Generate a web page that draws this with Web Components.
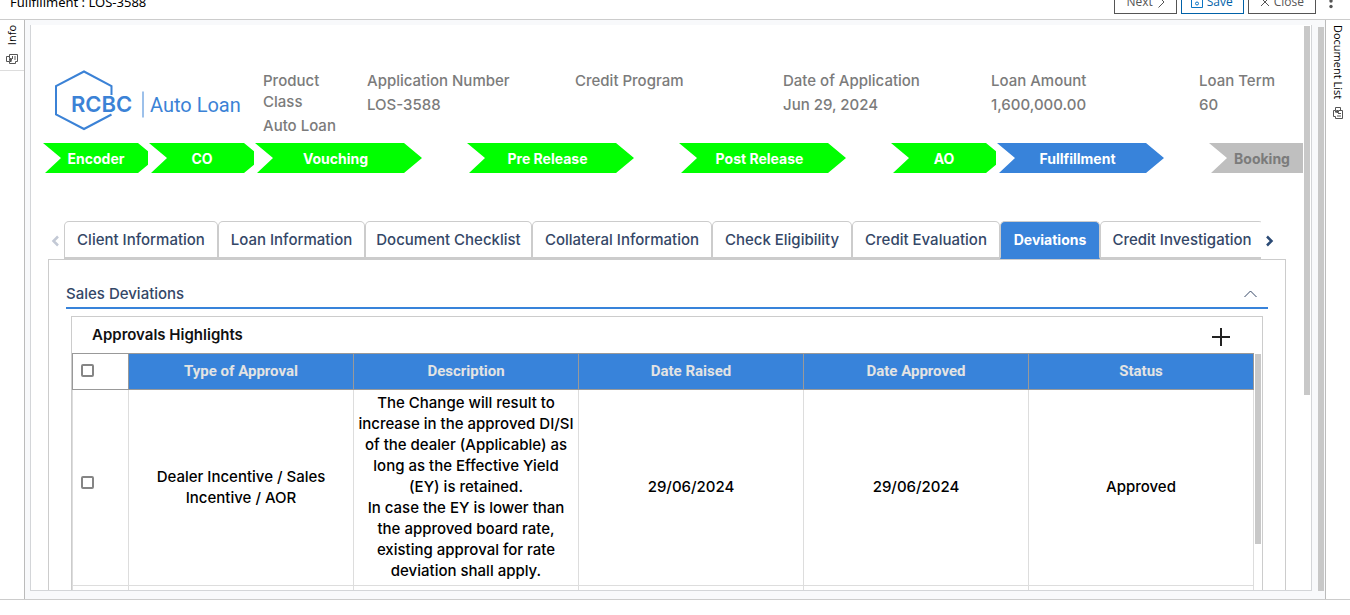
<!DOCTYPE html>
<html lang="en">
<head>
<meta charset="utf-8">
<title>Fullfillment : LOS-3588</title>
<style>
html,body{margin:0;height:100%}
body{font:500 15px/21px Inter,sans-serif;background:#fff;overflow:hidden;--blue:#3883da;--navy:#344767;--line:#ccc}
</style>
</head>
<body>
<los-app></los-app>
<script>
const define = (name, html, setup) => customElements.define(name, class extends HTMLElement {
  connectedCallback() {
    if (this.shadowRoot) return;
    const t = document.createElement('template');
    t.innerHTML = html;
    this.attachShadow({mode: 'open'}).append(t.content.cloneNode(true));
    if (setup) setup(this);
  }
});

define('los-scrollbar', `<style>:host{display:block;width:6px;background:#c8c8c8}</style>`);

define('los-button', `<style>
:host{display:block}
button{box-sizing:border-box;height:24px;display:flex;align-items:center;gap:4px;padding:0 11px;background:#fff;border:1px solid var(--c,#555);color:var(--c,#555);font:12px/20px "Open Sans",sans-serif}
:host(.save) button{padding:0 10px 0 9px}
</style><button type="button"><slot></slot></button>`);

define('los-topbar', `<style>
:host{display:flex;align-items:flex-end;justify-content:space-between;box-sizing:border-box;height:20px;border-bottom:1px solid var(--line);padding:0 13px 5px 10px;overflow:hidden;background:#fff}
h1{margin:0 0 1px;font:13px/22px "Noto Sans",sans-serif;color:#000}
nav{display:flex;align-items:flex-end;gap:4px}
.save{--c:#0061a8}
svg{display:block;flex:none;fill:none;stroke:currentColor}
.more{border:0;background:none;padding:0;margin-left:5px;width:12px;height:24px;color:#555}
</style>
<h1>Fullfillment : LOS-3588</h1>
<nav>
<los-button>Next<svg width="8" height="12" viewBox="0 0 8 12"><path d="M1.500 .5l5.500 5.500-5.500 5.500"/></svg></los-button>
<los-button class="save"><svg width="12" height="12" viewBox="0 0 12 12"><path d="M.5.5h11v11H.5zM3 .5v3h6v-3" stroke="#0a74c4"/><circle cx="6" cy="7.500" r="1.500" stroke="#0a74c4"/></svg>Save</los-button>
<los-button><svg width="10" height="10" viewBox="0 0 10 10"><path d="M1 1l8 8M9 1L1 9"/></svg>Close</los-button>
<button class="more" type="button" aria-label="More"><svg width="12" height="24" viewBox="0 0 12 24" style="fill:currentColor;stroke:none"><circle cx="6" cy="6" r="1.700"/><circle cx="6" cy="11" r="1.700"/><circle cx="6" cy="16.500" r="1.700"/></svg></button>
</nav>`);

define('los-rail', `<style>
:host{display:block;box-sizing:border-box;width:25px;background:#fff;border:0 solid #bbb}
:host([side=left]){border-right-width:1px}
:host([side=right]){border-left-width:1px}
button{display:flex;flex-direction:column;align-items:center;gap:8px;box-sizing:border-box;width:24px;padding:5px 0;border:0;background:none;color:#000;font:11px/16px "Open Sans",sans-serif}
:host([side=left]) button{border-bottom:1px solid #ddd}
span{writing-mode:vertical-rl}
:host([side=left]) span{transform:rotate(180deg)}
:host([side=right]) svg{transform:rotate(90deg)}
svg{display:block;fill:none;stroke:#555}
</style><button type="button"><span><slot></slot></span>
<svg width="12" height="12" viewBox="0 0 12 12"><path d="M3.500 5V1.500h8v7h-2M9.500 8.500v2h-6v-2M3.500 3.500h-3v5h3"/><path d="M3 6.500h3M4.500 5v4" stroke-width="2"/><path d="M6.500 3v3M9 3v4"/></svg></button>`);

define('los-logo', `<style>
:host{display:block;color:#3b82d6}
svg{display:block;overflow:visible}
</style><svg width="186" height="60" viewBox="0 0 186 60" role="img" aria-label="RCBC Auto Loan">
<path d="M57.500 25V16L30 1.500 2 16V44.500l28 14.500L57.500 44.500" fill="none" stroke="currentColor" stroke-width="2"/>
<path d="M89 21.500v26" stroke="currentColor"/>
<text x="17" y="42" fill="currentColor" font-family="Inter" font-weight="600" font-size="22">RCBC</text>
<text x="96" y="42" fill="currentColor" font-family="Roboto" font-weight="400" font-size="20">Auto Loan</text>
</svg>`);

define('los-field', `<style>
:host{display:block;color:#7b7b7b}
dl,dd,dt{margin:0}
dd{margin-top:3px}
</style><dl><dt><slot name="label"></slot></dt><dd><slot></slot></dd></dl>`);

define('los-summary', `<style>
:host{display:grid;grid-template-columns:repeat(12,minmax(0,1fr));padding:45px 8px 0 16px;height:73px}
los-logo{grid-column:span 2;padding-left:7px}
los-field{grid-column:span 2;padding:0 8px}
los-field.one{grid-column:span 1;padding-right:0}
</style>
<los-logo></los-logo>
<los-field class="one"><span slot="label">Product<br>Class</span>Auto Loan</los-field>
<los-field><span slot="label">Application Number</span>LOS-3588</los-field>
<los-field><span slot="label">Credit Program</span></los-field>
<los-field><span slot="label">Date of Application</span>Jun 29, 2024</los-field>
<los-field><span slot="label">Loan Amount</span>1,600,000.00</los-field>
<los-field class="one"><span slot="label">Loan Term</span>60</los-field>`);

define('los-step', `<style>
:host{display:block;overflow:hidden;grid-column:span 2;--bg:#0f0;color:#fff;margin-right:1px}
:host([narrow]){grid-column:span 1}
:host([state=current]){--bg:var(--blue)}
:host([state=todo]){--bg:#bfbfbf;color:#7b7b7b}
div{box-sizing:border-box;width:167px;height:30px;padding-right:6px;background:var(--bg);clip-path:polygon(0 0,149px 0,100% 50%,149px 100%,2px 100%,18px 50%);text-align:center;font-size:14px;font-weight:700;line-height:32px}
:host([narrow]) div{width:113px;padding-right:7px;clip-path:polygon(0 0,95px 0,100% 50%,95px 100%,2px 100%,18px 50%)}
</style><div><slot></slot></div>`);

define('los-stepper', `<style>
:host{display:grid;grid-template-columns:repeat(12,minmax(0,1fr));margin:0 -12px 0 12px}
</style>
<los-step narrow>Encoder</los-step><los-step narrow>CO</los-step><los-step>Vouching</los-step><los-step>Pre Release</los-step><los-step>Post Release</los-step><los-step narrow>AO</los-step><los-step state="current">Fullfillment</los-step><los-step narrow state="todo">Booking</los-step>`);

define('los-tabs', `<style>
:host{display:flex;align-items:center;margin:0 26px 0 17px;color:var(--navy)}
.list{display:flex;flex:1;min-width:0;overflow:hidden}
.list button{flex:none;box-sizing:border-box;height:38px;padding:0;border:1px solid var(--line);border-bottom-width:2px;border-radius:5px 5px 0 0;background:#fff;color:inherit;font:inherit;white-space:nowrap}
.list button[aria-selected=true]{background:var(--blue);border-bottom-color:var(--blue);color:#fff;font-size:14px;font-weight:700}
.nav{flex:none;width:16px;height:38px;padding:0;border:0;background:none;color:#2b4a75}
.nav.off{color:#c3c9d5}
svg{display:block;margin:2px auto 0;fill:none;stroke:currentColor;stroke-width:2.500}
</style>
<button class="nav off" type="button" aria-label="Previous tabs"><svg width="10" height="12" viewBox="0 0 10 12"><path d="M7 1.500L2.500 6 7 10.500"/></svg></button>
<div class="list" role="tablist"></div>
<button class="nav" type="button" aria-label="Next tabs"><svg width="10" height="12" viewBox="0 0 10 12"><path d="M3 1.500L7.500 6 3 10.500"/></svg></button>`, el => {
  const list = el.shadowRoot.querySelector('.list');
  [['Client Information',154],['Loan Information',147],['Document Checklist',167],['Collateral Information',180],['Check Eligibility',140],['Credit Evaluation',148],['Deviations',100],['Credit Investigation',164]].forEach(([label, width]) => {
    const b = document.createElement('button');
    b.type = 'button';
    b.role = 'tab';
    b.style.width = width + 'px';
    b.textContent = label;
    b.setAttribute('aria-selected', label === 'Deviations');
    list.append(b);
  });
});

define('los-section', `<style>
:host{display:block}
header{display:flex;align-items:center;justify-content:space-between;height:27px;border-bottom:2px solid var(--blue);color:var(--navy)}
h2{margin:0;font:inherit}
button{border:0;background:none;padding:0 11px 0 0;color:inherit}
svg{display:block;fill:none;stroke:currentColor}
</style><header><h2><slot name="title"></slot></h2><button type="button" aria-label="Collapse"><svg width="13" height="8" viewBox="0 0 13 8"><path d="M.5 7l6-6 6 6"/></svg></button></header><slot></slot>`);

define('los-approvals', `<style>
:host{display:block;border:1px solid var(--line);color:#000}
header{display:flex;align-items:center;justify-content:space-between;height:36px;padding:0 32px 0 20px}
h3{margin:0;padding-bottom:2px;font-size:15px;font-weight:600;line-height:21px;color:#111}
header button{border:0;background:none;padding:3px 0 0;color:#222}
svg{display:block;stroke:currentColor;stroke-width:2}
.body{display:flex;align-items:flex-start;gap:1px}
table{flex:1;width:100%;min-width:0;table-layout:fixed;border-collapse:collapse;text-align:center}
col:first-child{width:56px}
th{height:35px;padding:0;background:var(--blue);border:1px solid #999;color:#e3e3e3;font:700 15px/21px Roboto,sans-serif}
td{height:189px;padding:2px 0 4px;border:1px solid #ddd;white-space:nowrap}
tr>:first-child{text-align:left;padding-left:8px}
th:first-child{background:#fff}
tr.next td{height:40px}
input{appearance:none;display:block;box-sizing:border-box;width:13px;height:13px;margin:0 0 2px;border:2px solid #858585;border-radius:2px;background:#fff}
td input{margin-bottom:8px}
los-scrollbar{height:190px;margin:1px 1px 0 0}
</style>
<header><h3>Approvals Highlights</h3><button type="button" aria-label="Add"><svg width="18" height="18" viewBox="0 0 18 18"><path d="M9 0v18M0 9h18"/></svg></button></header>
<div class="body"><table><colgroup><col><col><col><col><col><col></colgroup>
<thead><tr><th><input type="checkbox" aria-label="Select all"></th><th>Type of Approval</th><th>Description</th><th>Date Raised</th><th>Date Approved</th><th>Status</th></tr></thead>
<tbody><tr><td><input type="checkbox" aria-label="Select row"></td><td>Dealer Incentive / Sales<br>Incentive / AOR</td><td>The Change will result to<br>increase in the approved DI/SI<br>of the dealer (Applicable) as<br>long as the Effective Yield<br>(EY) is retained.<br>In case the EY is lower than<br>the approved board rate,<br>existing approval for rate<br>deviation shall apply.</td><td>29/06/2024</td><td>29/06/2024</td><td>Approved</td></tr>
<tr class="next"><td></td><td></td><td></td><td></td><td></td><td></td></tr></tbody></table><los-scrollbar></los-scrollbar></div>`);

define('los-page', `<style>
:host{display:flex;flex:1;min-width:0;overflow:hidden;border:1px solid #d3d5d8;border-top:0;background:#fff}
main{flex:1;min-width:0;overflow:hidden}
los-stepper{margin-bottom:48px}
.panel{margin:0 17px;border:1px solid var(--line);padding:20px 17px 40px}
los-approvals{margin:7px 5px 0}
los-scrollbar{height:369px;margin:1px 1px 0 1px}
</style>
<main><los-summary></los-summary><los-stepper></los-stepper><los-tabs></los-tabs>
<div class="panel"><los-section><span slot="title">Sales Deviations</span><los-approvals></los-approvals></los-section></div></main>
<los-scrollbar></los-scrollbar>`);

define('los-app', `<style>
:host{display:flex;flex-direction:column;box-sizing:border-box;height:100%;padding-bottom:15px}
.work{flex:1;min-height:0;display:flex;border-bottom:1px solid var(--line)}
.stage{flex:1;min-width:0;display:flex;background:#f8f9fb;padding:5px 1px 8px 5px}
.stage>los-scrollbar{margin:2px 0 0 6px}
</style>
<los-topbar></los-topbar>
<div class="work"><los-rail side="left">Info</los-rail>
<div class="stage"><los-page></los-page><los-scrollbar></los-scrollbar></div>
<los-rail side="right">Document List</los-rail></div>`);
</script>
</body>
</html>
